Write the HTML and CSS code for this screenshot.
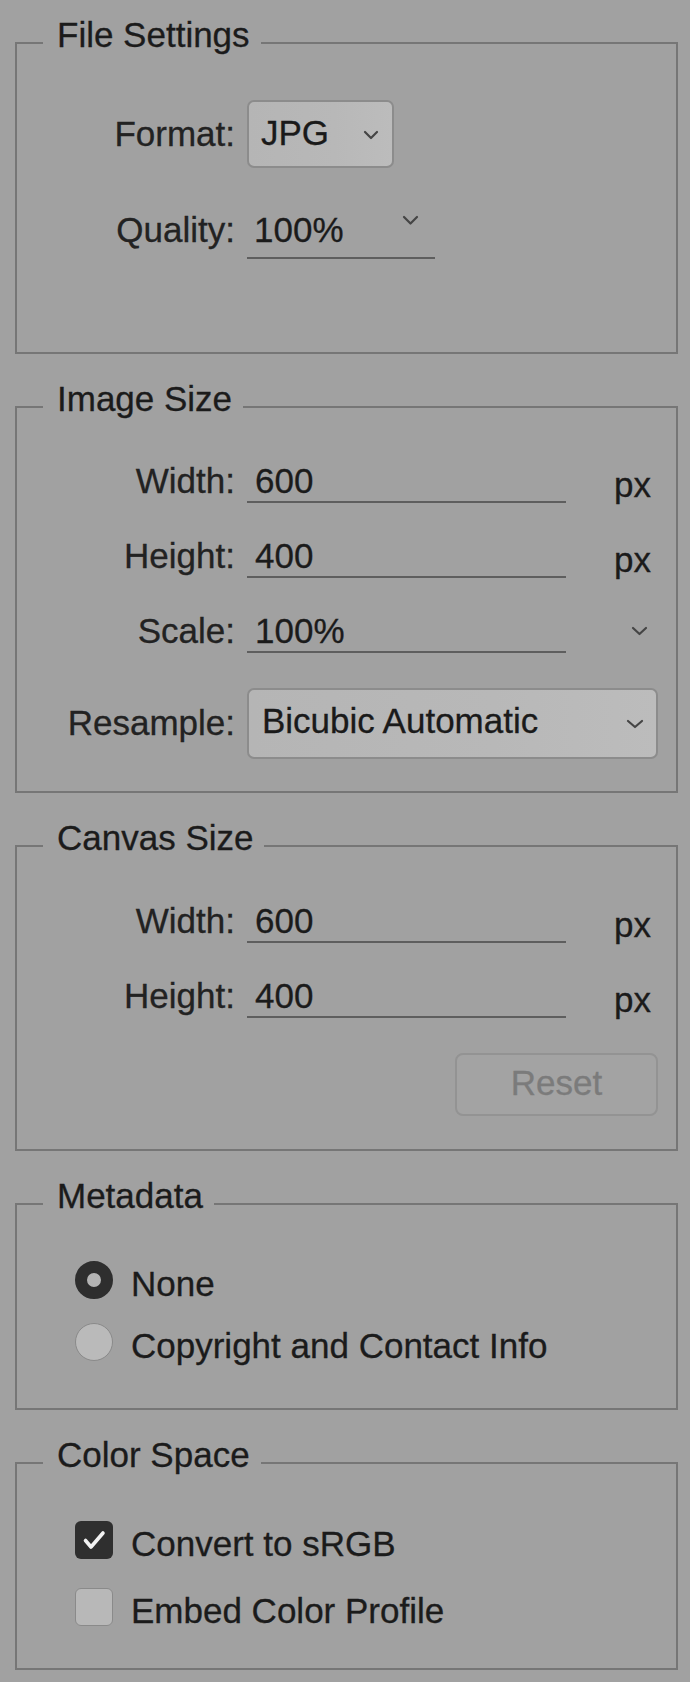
FILE: index.html
```html
<!DOCTYPE html>
<html lang="en">
<head>
<meta charset="utf-8">
<title>Export Settings</title>
<link rel="stylesheet" href="styles.css">
</head>
<body>
<div class="panel">

  <section class="group group-file">
    <h2 class="group-title">File Settings</h2>
    <div class="row row-select row-format">
      <span class="label">Format:</span>
      <div class="select select-format">
        <span class="select-value">JPG</span>
        <svg class="chev" width="16" height="10" viewBox="0 0 16 10"><path d="M2 2 L8 8 L14 2" /></svg>
      </div>
    </div>
    <div class="row row-field row-quality">
      <span class="label">Quality:</span>
      <div class="field combo">
        <span class="field-value">100%</span>
        <svg class="chev chev-combo" width="17" height="11" viewBox="0 0 17 11"><path d="M2 2 L8.5 8.5 L15 2" /></svg>
      </div>
    </div>
  </section>

  <section class="group group-image">
    <h2 class="group-title">Image Size</h2>
    <div class="row row-field">
      <span class="label">Width:</span>
      <div class="field"><span class="field-value">600</span></div>
      <span class="unit">px</span>
    </div>
    <div class="row row-field">
      <span class="label">Height:</span>
      <div class="field"><span class="field-value">400</span></div>
      <span class="unit">px</span>
    </div>
    <div class="row row-field">
      <span class="label">Scale:</span>
      <div class="field"><span class="field-value">100%</span></div>
      <span class="unit unit-chev">
        <svg class="chev" width="17" height="10" viewBox="0 0 17 10"><path d="M2 2 L8.5 8 L15 2" /></svg>
      </span>
    </div>
    <div class="row row-select row-resample">
      <span class="label">Resample:</span>
      <div class="select select-wide">
        <span class="select-value">Bicubic Automatic</span>
        <svg class="chev" width="18" height="10" viewBox="0 0 18 10"><path d="M2 2 L9 8 L16 2" /></svg>
      </div>
    </div>
  </section>

  <section class="group group-canvas">
    <h2 class="group-title">Canvas Size</h2>
    <div class="row row-field">
      <span class="label">Width:</span>
      <div class="field"><span class="field-value">600</span></div>
      <span class="unit">px</span>
    </div>
    <div class="row row-field">
      <span class="label">Height:</span>
      <div class="field"><span class="field-value">400</span></div>
      <span class="unit">px</span>
    </div>
    <div class="button-row">
      <button class="btn-reset" type="button" disabled>Reset</button>
    </div>
  </section>

  <section class="group group-meta">
    <h2 class="group-title">Metadata</h2>
    <div class="option option-first">
      <span class="radio radio-on"></span>
      <span class="option-label">None</span>
    </div>
    <div class="option option-second">
      <span class="radio"></span>
      <span class="option-label">Copyright and Contact Info</span>
    </div>
  </section>

  <section class="group group-color">
    <h2 class="group-title">Color Space</h2>
    <div class="option option-first">
      <span class="check check-on">
        <svg width="38" height="38" viewBox="0 0 38 38"><path d="M10.5 19.5 L16 26 L28 12" /></svg>
      </span>
      <span class="option-label">Convert to sRGB</span>
    </div>
    <div class="option option-third">
      <span class="check"></span>
      <span class="option-label">Embed Color Profile</span>
    </div>
  </section>

</div>
</body>
</html>
```

FILE: styles.css
```css
* {
  box-sizing: border-box;
}

html, body {
  margin: 0;
  padding: 0;
  background: #a1a1a1;
}

body {
  font-family: "Liberation Sans", Arial, Helvetica, sans-serif;
  font-size: 35px;
  color: #1b1b1b;
  -webkit-text-stroke: 0.3px currentColor;
}

.panel {
  width: 690px;
  padding: 42px 12px 0 15px;
}

.group {
  border: 2px solid #767676;
  margin-top: 52px;
}

.group:first-child {
  margin-top: 0;
}

.group-title {
  margin: -29px 0 0 26px;
  width: fit-content;
  padding: 0 11px 0 14px;
  background: #a1a1a1;
  font-size: 35px;
  font-weight: 400;
  line-height: 40px;
  color: #1b1b1b;
}

/* ---------- grid rows ---------- */
.row {
  display: grid;
  grid-template-columns: 218px 319px 80px;
  column-gap: 12px;
}

.label {
  text-align: right;
  white-space: nowrap;
  line-height: 40px;
  height: 40px;
  color: #222;
}

.row-field {
  margin-top: 33px;
  align-items: start;
}

.field {
  height: 42px;
  line-height: 40px;
  border-bottom: 2px solid #5e5e5e;
  padding-left: 8px;
  white-space: nowrap;
}

.unit {
  text-align: right;
  padding-right: 7px;
  line-height: 40px;
  height: 42px;
  padding-top: 4px;
}

.unit-chev {
  padding-top: 0;
  padding-right: 10px;
  display: flex;
  justify-content: flex-end;
  align-items: flex-start;
}

.unit-chev .chev {
  margin-top: 15px;
}

.chev path {
  fill: none;
  stroke: #454545;
  stroke-width: 2.2;
  stroke-linecap: round;
  stroke-linejoin: round;
}

/* quality combo */
.row-quality {
  margin-top: 42px;
}

.combo {
  grid-column: 2 / 4;
  width: 188px;
  height: 49px;
  padding-left: 7px;
  padding-right: 16px;
  padding-bottom: 7px;
  display: flex;
  align-items: flex-start;
}

.combo .chev-combo {
  margin-left: auto;
  margin-top: 5px;
}

/* selects */
.row-select {
  align-items: start;
}

.row-select .label {
  line-height: 68px;
  height: 68px;
}

.row-format {
  margin-top: 45px;
}

.row-resample {
  margin-top: 35px;
}

.row-resample .label {
  line-height: 70px;
  height: 70px;
}

.select {
  height: 71px;
  border: 2px solid #8c8c8c;
  border-radius: 7px;
  background: linear-gradient(90deg, #b5b5b5 0%, #b8b8b8 60%, #bcbcbc 100%);
  display: flex;
  align-items: flex-start;
  padding: 0 12px 0 13px;
}

.select-value {
  line-height: 62px;
  height: 65px;
  padding-bottom: 3px;
  color: #1a1a1a;
  white-space: nowrap;
}

.select .chev {
  margin-left: auto;
  margin-top: 29px;
}

.select-format {
  grid-column: 2 / 4;
  width: 147px;
  height: 68px;
  padding-left: 12px;
  padding-right: 13px;
}

.select-format .chev {
  margin-top: 28px;
}

.select-wide {
  grid-column: 2 / 4;
}

/* groups spacing */
.group-file {
  padding-bottom: 93px;
}

.group-image .row-field:first-of-type {
  margin-top: 42px;
}

.group-image {
  padding-bottom: 32px;
}

.group-canvas .row-field:first-of-type {
  margin-top: 43px;
}

.group-canvas {
  padding-bottom: 33px;
}

/* reset button */
.button-row {
  display: flex;
  justify-content: flex-end;
  margin-top: 35px;
  padding-right: 18px;
}

.btn-reset {
  width: 203px;
  height: 63px;
  border: 2px solid #939393;
  border-radius: 8px;
  background: #a3a3a3;
  font-family: "Liberation Sans", Arial, Helvetica, sans-serif;
  font-size: 35px;
  line-height: 56px;
  padding: 0 0 5px 0;
  color: #7b7b7b;
  -webkit-text-stroke: 0.3px #7b7b7b;
  text-align: center;
}

/* options: radios & checkboxes */
.option {
  display: flex;
  align-items: flex-start;
  padding-left: 58px;
  line-height: 40px;
}

.option-label {
  margin-left: 18px;
  white-space: nowrap;
}

.group-meta .option-first {
  margin-top: 48px;
}

.group-meta .option-second {
  margin-top: 22px;
}

.group-meta {
  padding-bottom: 42px;
}

.group-color .option-first {
  margin-top: 49px;
}

.group-color .option-third {
  margin-top: 27px;
}

.group-color {
  padding-bottom: 37px;
}

.radio {
  flex: none;
  width: 38px;
  height: 38px;
  margin-top: -3px;
  border-radius: 50%;
  background: #bababa;
  border: 1.5px solid #8a8a8a;
}

.radio-on {
  background: #b4b4b4;
  border: 12px solid #2e2e2e;
}

.check {
  flex: none;
  width: 38px;
  height: 38px;
  margin-top: -3px;
  border-radius: 6px;
  background: #b8b8b8;
  border: 1.5px solid #8a8a8a;
}

.check-on {
  background: #2f2f2f;
  border: none;
}

.check-on svg {
  display: block;
}

.check-on path {
  fill: none;
  stroke: #f2f2f2;
  stroke-width: 3.6;
  stroke-linecap: round;
  stroke-linejoin: round;
}
```
